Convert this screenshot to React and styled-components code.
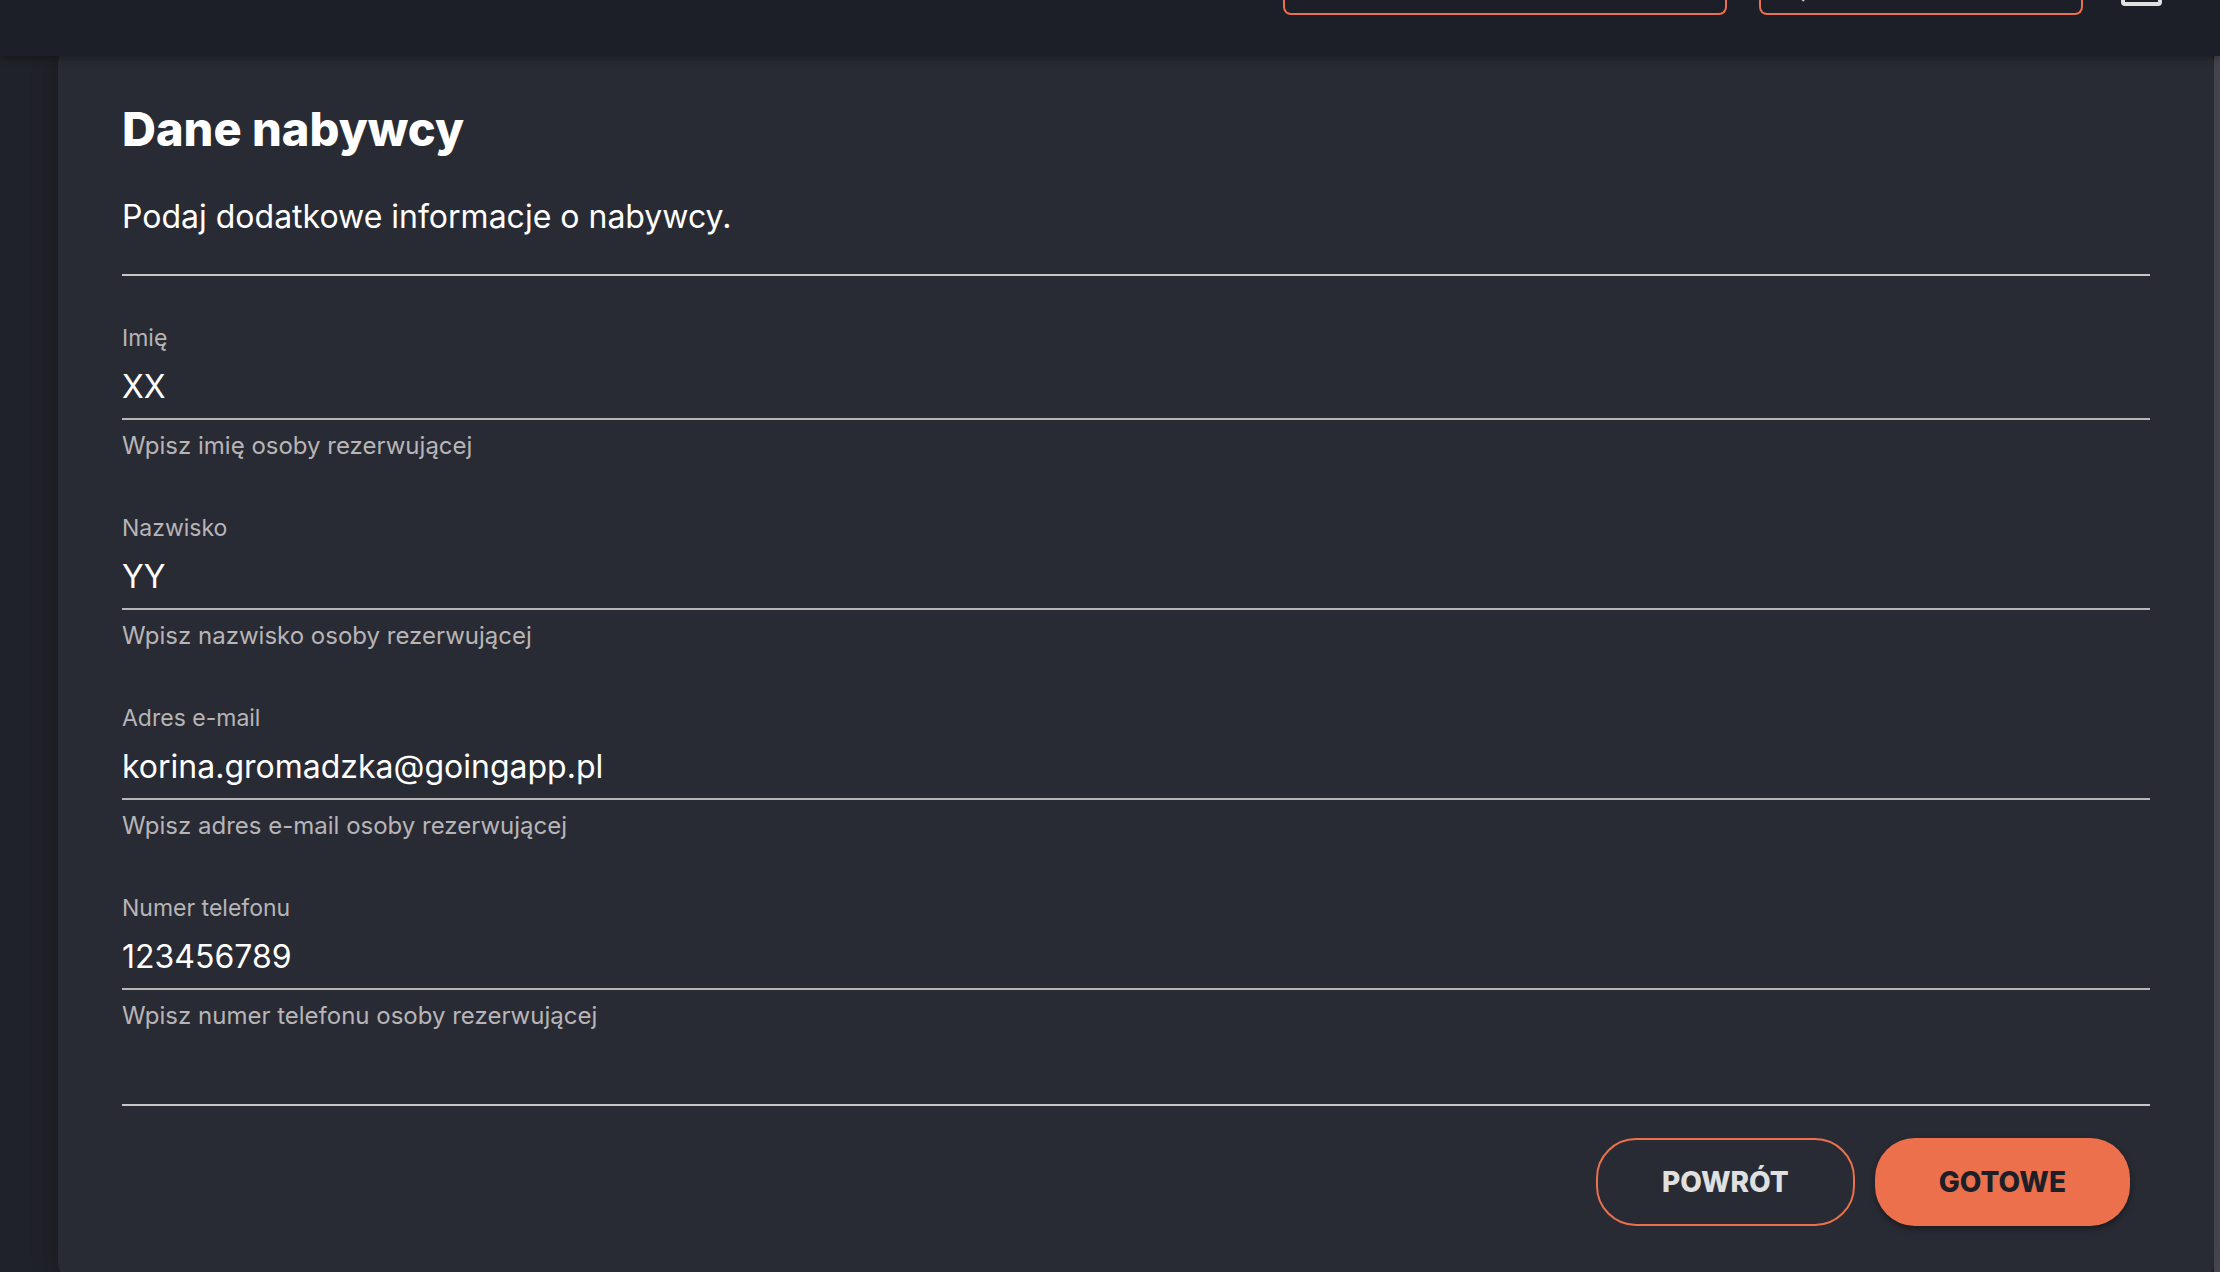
import React, { useState } from 'react';
import styled, { createGlobalStyle } from 'styled-components';

const GlobalStyle = createGlobalStyle`
  * {
    box-sizing: border-box;
  }

  body {
    margin: 0;
    background: #202229;
    color: #fff;
    font-family: Inter, 'Open Sans', sans-serif;
  }
`;

const Page = styled.div`
  height: 100vh;
  display: flex;
  flex-direction: column;
  overflow: hidden;
`;

const Header = styled.header`
  flex: none;
  z-index: 1;
  display: flex;
  align-items: flex-start;
  justify-content: flex-end;
  gap: 32px;
  height: 56px;
  padding-right: 57px;
  background: #1c1f27;
  box-shadow: 0 2px 8px rgba(0, 0, 0, 0.35);
`;

const HeaderButton = styled.button`
  width: ${({ $wide }) => ($wide ? '444px' : '324px')};
  height: 15px;
  padding: 0 24px;
  display: flex;
  align-items: flex-end;
  overflow: hidden;
  background: transparent;
  border: 2px solid #ec704b;
  border-top: none;
  border-radius: 0 0 8px 8px;
  cursor: pointer;
`;

const SearchIcon = styled.svg`
  display: block;
  flex: none;
  width: 20px;
  height: 20px;
  margin-bottom: 11px;
`;

const MenuButton = styled.button`
  width: 44px;
  height: 8px;
  margin-left: 4px;
  padding: 0;
  border: none;
  background: transparent;
  cursor: pointer;
`;

const MenuIcon = styled.svg`
  display: block;
`;

const Content = styled.main`
  flex: 1;
  min-height: 0;
  padding: 0 6px 0 58px;
  background: linear-gradient(to left, #48494f 6px, transparent 6px);
`;

const Panel = styled.form`
  margin-top: -9px;
  padding: 54px 64px 53px;
  background: #292b34;
  border-radius: 16px;
  box-shadow: -4px 0 24px rgba(0, 0, 0, 0.2);
`;

const Title = styled.h1`
  margin: 0;
  font-size: 47px;
  font-weight: 800;
  line-height: 56px;
`;

const Intro = styled.p`
  margin: 40px 0 37px;
  font-size: 32px;
  line-height: 40px;
`;

const Divider = styled.hr`
  height: 2px;
  margin: 0;
  border: none;
  background: #c7c5c7;
`;

const Fields = styled.div`
  display: flex;
  flex-direction: column;
  gap: 48px;
  padding: 46px 0 70px;
`;

const Field = styled.div`
  display: flex;
  flex-direction: column;
`;

const Label = styled.label`
  color: #b7b5b7;
  font-size: 23px;
  line-height: 32px;
`;

const Input = styled.input`
  width: 100%;
  height: 66px;
  padding: 0;
  border: none;
  border-bottom: 2px solid #b7b5b7;
  border-radius: 0;
  outline: none;
  background: transparent;
  color: #fff;
  font-family: inherit;
  font-size: 32px;
`;

const Hint = styled.span`
  margin-top: 8px;
  color: #b7b5b7;
  font-size: 24px;
  line-height: 36px;
`;

const Actions = styled.div`
  display: flex;
  justify-content: flex-end;
  gap: 20px;
  padding: 32px 20px 0;
`;

const ActionButton = styled.button`
  height: 88px;
  padding: 0 64px;
  border: ${({ $primary }) => ($primary ? 'none' : '2px solid #ec704b')};
  border-radius: 40px;
  background: ${({ $primary }) => ($primary ? '#ec704b' : 'transparent')};
  box-shadow: ${({ $primary }) => ($primary ? '0 3px 6px rgba(0, 0, 0, 0.4)' : 'none')};
  color: ${({ $primary }) => ($primary ? '#1c1f27' : '#e0e0e0')};
  font-family: inherit;
  font-size: 28px;
  font-weight: 800;
  cursor: pointer;
`;

const fields = [
  { name: 'firstName', label: 'Imię', hint: 'Wpisz imię osoby rezerwującej', type: 'text' },
  { name: 'lastName', label: 'Nazwisko', hint: 'Wpisz nazwisko osoby rezerwującej', type: 'text' },
  { name: 'email', label: 'Adres e-mail', hint: 'Wpisz adres e-mail osoby rezerwującej', type: 'email' },
  { name: 'phone', label: 'Numer telefonu', hint: 'Wpisz numer telefonu osoby rezerwującej', type: 'tel' },
];

const App = () => {
  const [values, setValues] = useState({
    firstName: 'XX',
    lastName: 'YY',
    email: 'korina.gromadzka@goingapp.pl',
    phone: '123456789',
  });

  const handleChange = (e) => {
    setValues({ ...values, [e.target.name]: e.target.value });
  };

  return (
    <Page>
      <GlobalStyle />
      <Header>
        <HeaderButton type="button" $wide aria-label="Miasto" />
        <HeaderButton type="button" aria-label="Szukaj">
          <SearchIcon viewBox="0 0 20 20" fill="none" stroke="#c7c5c7" strokeWidth="2">
            <circle cx="8" cy="8" r="6" />
            <path d="M12 12l7 7" />
          </SearchIcon>
        </HeaderButton>
        <MenuButton type="button" aria-label="Konto">
          <MenuIcon width="44" height="8" viewBox="0 0 44 8" fill="none">
            <path d="M4 -30V2Q4 4 6 4H39Q41 4 41 2V-30" stroke="#e0e0e0" strokeWidth="4" />
          </MenuIcon>
        </MenuButton>
      </Header>

      <Content>
        <Panel onSubmit={(e) => e.preventDefault()}>
          <Title>Dane nabywcy</Title>
          <Intro>Podaj dodatkowe informacje o nabywcy.</Intro>
          <Divider />
          <Fields>
            {fields.map(({ name, label, hint, type }) => (
              <Field key={name}>
                <Label htmlFor={name}>{label}</Label>
                <Input
                  id={name}
                  name={name}
                  type={type}
                  value={values[name]}
                  onChange={handleChange}
                  aria-describedby={`${name}-hint`}
                />
                <Hint id={`${name}-hint`}>{hint}</Hint>
              </Field>
            ))}
          </Fields>
          <Divider />
          <Actions>
            <ActionButton type="button">POWRÓT</ActionButton>
            <ActionButton type="submit" $primary>GOTOWE</ActionButton>
          </Actions>
        </Panel>
      </Content>
    </Page>
  );
};

export default App;
